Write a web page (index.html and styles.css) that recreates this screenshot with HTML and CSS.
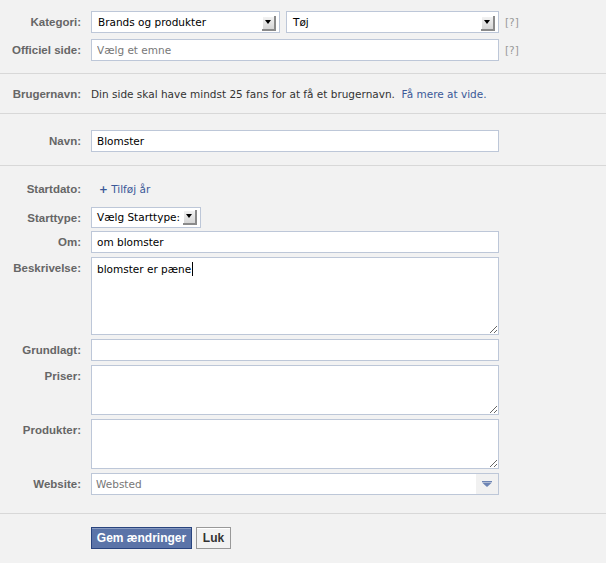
FILE: index.html
```html
<!DOCTYPE html>
<html>

<head>
    <title>Rediger side</title>
    <meta charset="utf-8">
    <link rel="stylesheet" href="styles.css">
</head>

<body>
    <form class="editPage">
        <div class="section topSection">
            <div class="row">
                <label class="label">Kategori:</label>
                <div class="field double">
                    <div class="select categoryMain"><span>Brands og produkter</span><i class="arrow"></i></div>
                    <div class="select categorySub"><span>Tøj</span><i class="arrow"></i></div>
                </div>
                <span class="help">[?]</span>
            </div>
            <div class="row">
                <label class="label">Officiel side:</label>
                <input class="field input" type="text" placeholder="Vælg et emne">
                <span class="help">[?]</span>
            </div>
        </div>

        <div class="section userSection">
            <div class="row textRow">
                <label class="label">Brugernavn:</label>
                <p class="note">Din side skal have mindst 25 fans for at få et brugernavn.&nbsp; <a href="#">Få mere at vide.</a></p>
            </div>
        </div>

        <div class="section nameSection">
            <div class="row">
                <label class="label">Navn:</label>
                <input class="field input" type="text" value="Blomster">
            </div>
        </div>

        <div class="section infoSection">
            <div class="row dateRow">
                <label class="label">Startdato:</label>
                <a class="addYear" href="#"><b>+</b> Tilføj år</a>
            </div>
            <div class="row typeRow">
                <label class="label">Starttype:</label>
                <div class="select startType"><span>Vælg Starttype:</span><i class="arrow"></i></div>
            </div>
            <div class="row">
                <label class="label">Om:</label>
                <input class="field input" type="text" value="om blomster">
            </div>
            <div class="row">
                <label class="label">Beskrivelse:</label>
                <div class="field textarea big">blomster er pæne<span class="caret"></span></div>
            </div>
            <div class="row">
                <label class="label">Grundlagt:</label>
                <input class="field input" type="text">
            </div>
            <div class="row">
                <label class="label">Priser:</label>
                <textarea class="field textarea"></textarea>
            </div>
            <div class="row">
                <label class="label">Produkter:</label>
                <textarea class="field textarea"></textarea>
            </div>
            <div class="row">
                <label class="label">Website:</label>
                <div class="field website">
                    <input class="siteInput" type="text" placeholder="Websted">
                    <span class="siteMenu">
                        <svg width="10" height="6" viewBox="0 0 10 6">
                            <rect x="0" y="0" width="10" height="1" fill="#6d84b4" />
                            <path d="M0 1.5 H10 L5 6 Z" fill="#6d84b4" />
                        </svg>
                    </span>
                </div>
            </div>
        </div>

        <div class="buttons">
            <button type="button" class="save">Gem ændringer</button>
            <button type="button" class="close">Luk</button>
        </div>
    </form>
</body>

</html>
```

FILE: styles.css
```css
* {
    box-sizing: border-box
}

body {
    margin: 0;
    background: #f2f2f2;
    font-family: "DejaVu Sans", Verdana, sans-serif;
    font-size: 10.5px;
    color: #333;
}

.section {
    border-bottom: 1px solid #d8d8d8;
}

.topSection {
    padding: 11px 0 12px;
}

.userSection {
    padding: 13px 0 12px;
}

.nameSection {
    padding: 16px 0 13px;
}

.infoSection {
    padding: 12px 0 18px;
}

.row {
    display: flex;
    align-items: flex-start;
    margin-bottom: 4px;
}

.row:last-child {
    margin-bottom: 0;
}

.topSection .row {
    margin-bottom: 6px;
}

.topSection .row:last-child {
    margin-bottom: 0;
}

.dateRow {
    height: 22px;
    margin-bottom: 7px;
}

.typeRow {
    margin-bottom: 3px;
}

.label {
    width: 81px;
    margin-right: 10px;
    flex-shrink: 0;
    text-align: right;
    font-family: "Liberation Sans", Arial, sans-serif;
    font-size: 11.5px;
    font-weight: bold;
    color: #666;
    line-height: 14px;
    padding-top: 4px;
}

.textRow .label,
.note {
    padding-top: 0;
}

.note {
    margin: 0;
    line-height: 14px;
    color: #333;
}

a {
    color: #3b5998;
    text-decoration: none;
}

.addYear {
    line-height: 14px;
    padding: 4px 0 0 8px;
}

.field {
    width: 408px;
    flex-shrink: 0;
}

.input,
.textarea,
.siteInput {
    font-family: "DejaVu Sans", Verdana, sans-serif;
    font-size: 10.5px;
    color: #000;
    outline: none;
}

.input,
.textarea {
    height: 22px;
    margin: 0;
    padding: 3px 5px;
    border: 1px solid #bdc7d8;
    background: #fff;
}

.input::placeholder,
.siteInput::placeholder {
    color: #777;
}

.textarea {
    height: 50px;
    display: block;
    resize: vertical;
    overflow: auto;
    line-height: 14px;
}

.big {
    height: 78px;
    padding-top: 4px;
}

.caret {
    display: inline-block;
    width: 1px;
    height: 14px;
    margin-left: 1px;
    vertical-align: -3px;
    background: #000;
}

.help {
    margin-left: 6px;
    padding-top: 4px;
    line-height: 14px;
    color: #999;
}

.double {
    display: flex;
    gap: 6px;
}

.select {
    display: flex;
    align-items: flex-start;
    height: 22px;
    padding: 3px 3px 0 6px;
    border: 1px solid #bdc7d8;
    background: #fff;
    color: #000;
    line-height: 14px;
}

.select span {
    flex: 1;
    white-space: nowrap;
}

.categoryMain {
    width: 189px;
}

.categorySub {
    width: 213px;
}

.startType {
    width: 110px;
    height: 21px;
    padding-left: 5px;
    padding-top: 2px;
}

.arrow {
    position: relative;
    width: 14px;
    height: 15px;
    margin-top: 1px;
    background: linear-gradient(#f4f4f4, #d6d6d6);
    border-right: 2px solid #8a8a8a;
    border-bottom: 2px solid #8a8a8a;
    box-shadow: inset 1px 1px 0 #fff;
}

.startType .arrow {
    margin-top: 0;
    flex-shrink: 0;
}

.arrow::after {
    content: "";
    position: absolute;
    left: 3px;
    top: 4px;
    border-left: 3.5px solid transparent;
    border-right: 3.5px solid transparent;
    border-top: 4px solid #000;
}

.website {
    display: flex;
    height: 22px;
    border: 1px solid #bdc7d8;
    background: #fff;
}

.siteInput {
    flex: 1;
    min-width: 0;
    border: none;
    padding: 0 4px;
}

.siteMenu {
    width: 22px;
    display: flex;
    align-items: center;
    justify-content: center;
    background: #f1f1f1;
}

.buttons {
    padding: 13px 0 0 91px;
    display: flex;
    gap: 4px;
}

.buttons button {
    height: 22px;
    padding: 0;
    white-space: nowrap;
    font-family: "Liberation Sans", Arial, sans-serif;
    font-size: 12px;
    font-weight: bold;
    cursor: pointer;
}

.save {
    width: 101px;
    color: #fff;
    background: #5b74a8;
    border: 1px solid #29447e;
    box-shadow: inset 0 1px 0 #8a9cc2;
}

.close {
    width: 35px;
    color: #333;
    background: #f2f2f2;
    border: 1px solid #999;
    box-shadow: inset 0 1px 0 #fff;
}
```
